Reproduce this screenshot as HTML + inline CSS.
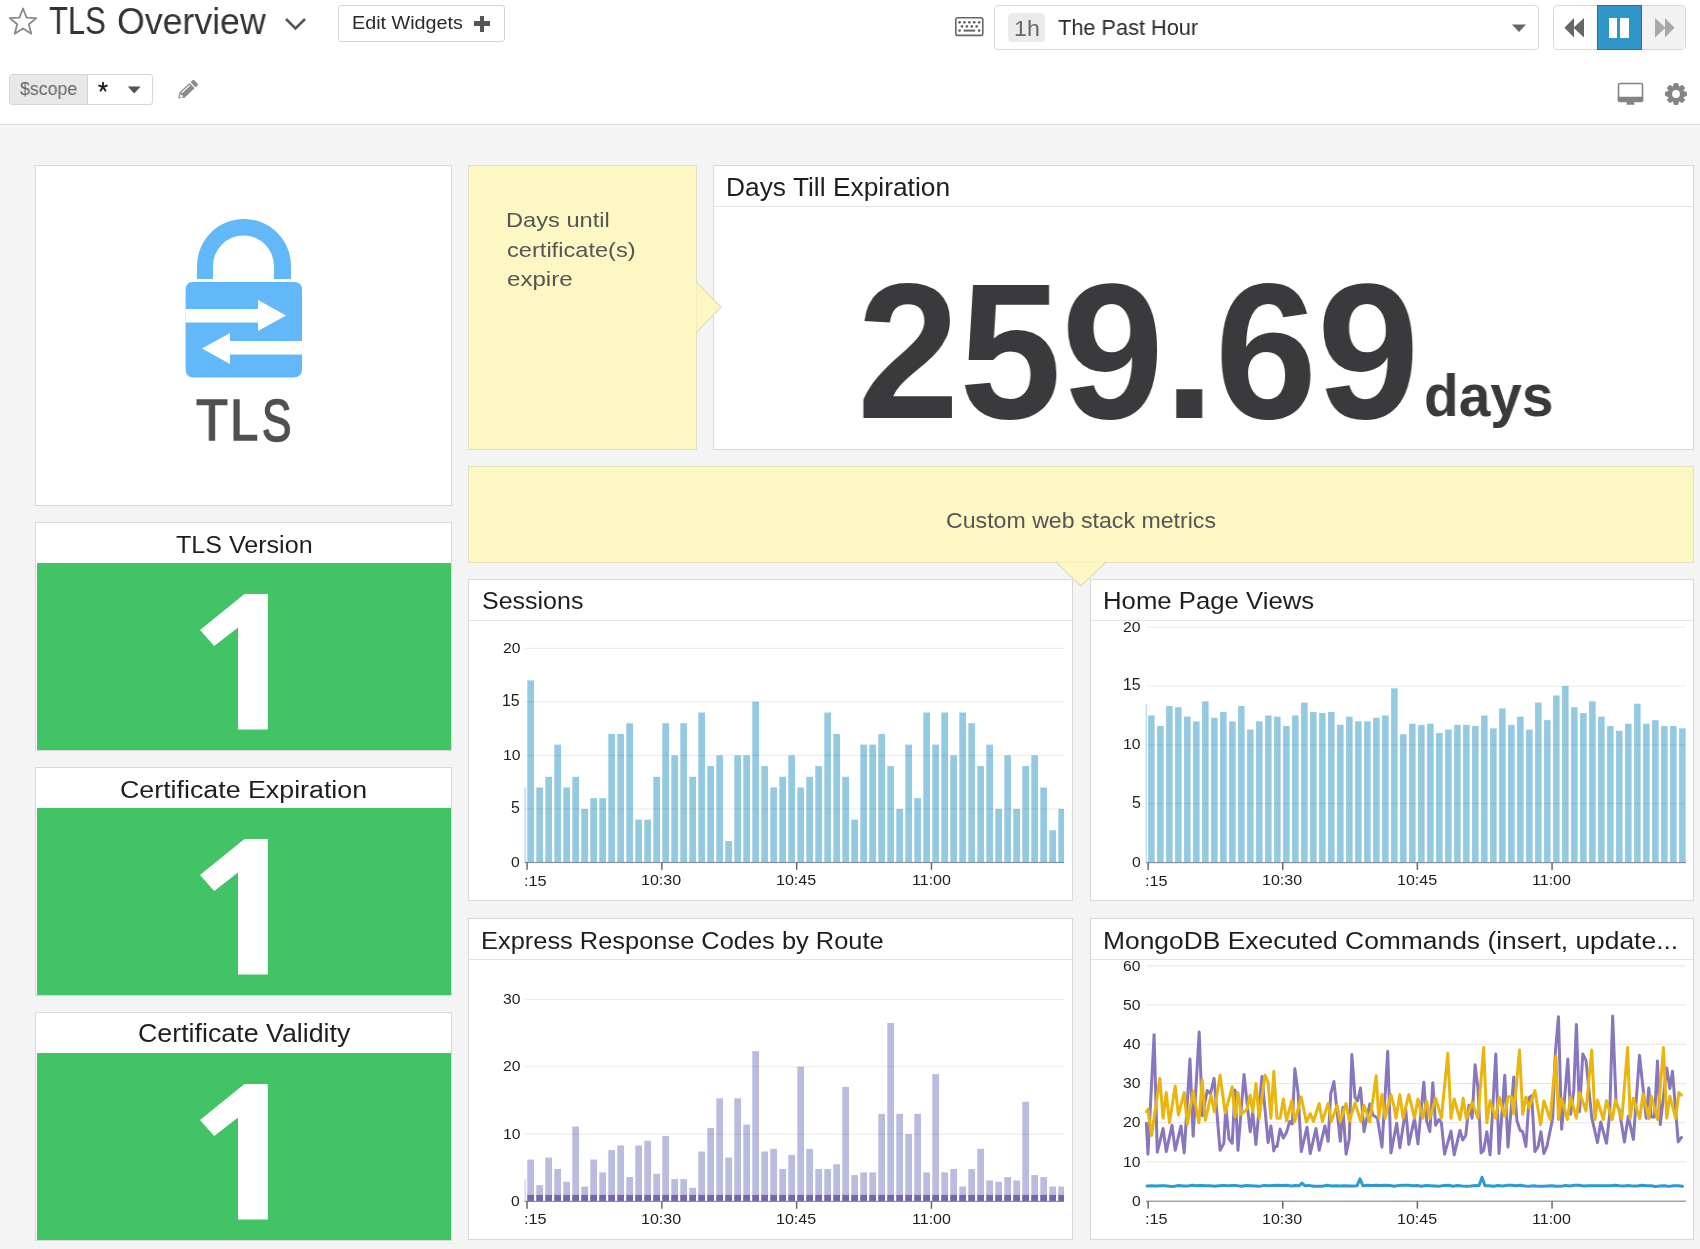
<!DOCTYPE html>
<html><head><meta charset="utf-8"><title>TLS Overview</title>
<style>
html,body{margin:0;padding:0}
body{width:1700px;height:1249px;overflow:hidden;position:relative;background:#f4f4f4;font-family:"Liberation Sans",sans-serif}
.a{position:absolute;box-sizing:content-box}
.t{position:absolute;white-space:nowrap;transform-origin:0 0;will-change:transform}
svg.a{overflow:visible}
</style></head><body>
<div class="a" style="left:0px;top:0px;width:1700px;height:124px;background:#fff;"></div>
<div class="a" style="left:0px;top:124px;width:1700px;height:1px;background:#d9d9d9;"></div>
<div class="a" style="left:0px;top:125px;width:1700px;height:2px;background:#f9f9f9;"></div>
<svg class="a" style="left:8px;top:7px" width="30" height="29" viewBox="0 0 30 29"><polygon points="15,1.5 18.6,10.6 28.3,11.1 20.8,17.3 23.3,26.8 15,21.5 6.7,26.8 9.2,17.3 1.7,11.1 11.4,10.6" fill="none" stroke="#8a8a8a" stroke-width="1.8" stroke-linejoin="round"/></svg>
<div class="t" style="left:49.28px;top:2.40px;font-size:37.86px;line-height:38px;color:#333;transform:scaleX(0.8171);">TLS</div>
<div class="t" style="left:116.59px;top:3.40px;font-size:36.55px;line-height:37px;color:#333;transform:scaleX(0.9763);">Overview</div>
<svg class="a" style="left:283px;top:16px" width="26" height="16" viewBox="0 0 26 16"><polyline points="3,3 12.5,12.5 22,3" fill="none" stroke="#555" stroke-width="2.6"/></svg>
<div class="a" style="left:338px;top:5px;width:165px;height:35px;border:1px solid #d4d4d4;border-radius:3px;background:#fff"></div>
<div class="t" style="left:351.62px;top:14.10px;font-size:18.48px;line-height:18px;color:#2b2b2b;transform:scaleX(1.0693);">Edit Widgets</div>
<div class="a" style="left:474px;top:21.2px;width:16.4px;height:4.6px;background:#555;"></div>
<div class="a" style="left:479.9px;top:15.6px;width:4.6px;height:16px;background:#555;"></div>
<svg class="a" style="left:950px;top:12px" width="40" height="30" viewBox="950 12 40 30"><rect x="955.8" y="17.8" width="27" height="17.6" rx="2" fill="none" stroke="#666" stroke-width="1.6"/><circle cx="959.6" cy="22.3" r="1.35" fill="#666"/><circle cx="964.4" cy="22.3" r="1.35" fill="#666"/><circle cx="969.3" cy="22.3" r="1.35" fill="#666"/><circle cx="974.2" cy="22.3" r="1.35" fill="#666"/><circle cx="979.1" cy="22.3" r="1.35" fill="#666"/><circle cx="962.0" cy="26.4" r="1.35" fill="#666"/><circle cx="966.9" cy="26.4" r="1.35" fill="#666"/><circle cx="971.8" cy="26.4" r="1.35" fill="#666"/><circle cx="976.7" cy="26.4" r="1.35" fill="#666"/><circle cx="959.6" cy="30.6" r="1.35" fill="#666"/><circle cx="979.1" cy="30.6" r="1.35" fill="#666"/><rect x="963.6" y="29.6" width="11.6" height="2" fill="#666"/></svg>
<div class="a" style="left:994px;top:5px;width:543px;height:43px;border:1px solid #d9d9d9;border-radius:4px;background:#fff"></div>
<div class="a" style="left:1008px;top:13px;width:37px;height:29px;border-radius:4px;background:#ebebeb"></div>
<div class="t" style="left:1013.76px;top:16.80px;font-size:22.62px;line-height:23px;color:#666;transform:scaleX(1.0254);">1h</div>
<div class="t" style="left:1058.17px;top:17.30px;font-size:21.93px;line-height:22px;color:#2b2b2b;transform:scaleX(0.9916);">The Past Hour</div>
<svg class="a" style="left:1511px;top:24px" width="16" height="9" viewBox="0 0 16 9"><polygon points="1,0.5 15,0.5 8,8" fill="#666"/></svg>
<div class="a" style="left:1553px;top:5px;width:131px;height:43px;border:1px solid #d9d9d9;border-radius:4px;background:#fff;overflow:hidden"><div style="position:absolute;left:88px;top:0;width:44px;height:43px;background:#f2f2f2"></div></div>
<div class="a" style="left:1597px;top:5px;width:43px;height:43px;background:#3095c9;border:1px solid #1f73a0"></div>
<div class="a" style="left:1609px;top:17.5px;width:8.4px;height:20.3px;background:#fff;"></div>
<div class="a" style="left:1620.4px;top:17.5px;width:9.1px;height:20.3px;background:#fff;"></div>
<svg class="a" style="left:1563px;top:17px" width="23" height="22" viewBox="0 0 23 22"><polygon points="1.4,10.7 11,1.1 11,20.5" fill="#666"/><polygon points="10.5,10.7 21,1.1 21,20.5" fill="#666"/></svg>
<svg class="a" style="left:1653px;top:17px" width="23" height="22" viewBox="0 0 23 22"><polygon points="21.5,10.7 12,1.1 12,20.5" fill="#a8a8a8"/><polygon points="12.5,10.7 2,1.1 2,20.5" fill="#a8a8a8"/></svg>
<div class="a" style="left:9px;top:74px;width:142px;height:29px;border:1px solid #d6d6d6;border-radius:3px;background:#fff;overflow:hidden"><div style="position:absolute;left:0;top:0;width:77px;height:29px;background:#e8e8e8;border-right:1px solid #d6d6d6"></div></div>
<div class="t" style="left:19.82px;top:79.20px;font-size:18.51px;line-height:19px;color:#666;transform:scaleX(0.9610);">$scope</div>
<svg class="a" style="left:96px;top:80px" width="14" height="14" viewBox="0 0 14 14"><g stroke="#222" stroke-width="1.9" stroke-linecap="round"><line x1="7" y1="2.8" x2="7" y2="7"/><line x1="7" y1="7" x2="10.9" y2="5.6"/><line x1="7" y1="7" x2="3.1" y2="5.6"/><line x1="7" y1="7" x2="9.5" y2="10.6"/><line x1="7" y1="7" x2="4.5" y2="10.6"/></g></svg>
<svg class="a" style="left:127px;top:86px" width="15" height="8" viewBox="0 0 15 8"><polygon points="0.8,0.5 13.6,0.5 7.2,7.4" fill="#555"/></svg>
<svg class="a" style="left:170px;top:74px" width="35" height="30" viewBox="170 74 35 30"><g transform="translate(178.2,98.6) rotate(-43)"><polygon points="0,0 5.6,-3.7 19,-3.7 19,3.7 5.6,3.7" fill="#8a8a8a"/><rect x="20.2" y="-3.7" width="4.1" height="7.4" rx="1.3" fill="#8a8a8a"/><rect x="6.6" y="-2.4" width="11.2" height="1.1" fill="#fff"/><polygon points="1.9,0.2 4.6,-1.7 5.4,0.4 4.4,2.2" fill="#fff"/></g></svg>
<svg class="a" style="left:1617px;top:82px" width="27" height="24" viewBox="0 0 27 24"><rect x="1.5" y="1.5" width="24" height="18" rx="1.6" fill="none" stroke="#848484" stroke-width="1.6"/><rect x="0.8" y="14.8" width="25.4" height="5" rx="1.4" fill="#848484"/><polygon points="10,19.5 17,19.5 17.6,22.8 9.4,22.8" fill="#848484"/></svg>
<svg class="a" style="left:1663px;top:81px" width="26" height="26" viewBox="0 0 26 26"><polygon points="10.39,6.07 11.21,2.55 14.79,2.55 15.61,6.07 16.05,6.26 19.12,4.34 21.66,6.88 19.74,9.95 19.93,10.39 23.45,11.21 23.45,14.79 19.93,15.61 19.74,16.05 21.66,19.12 19.12,21.66 16.05,19.74 15.61,19.93 14.79,23.45 11.21,23.45 10.39,19.93 9.95,19.74 6.88,21.66 4.34,19.12 6.26,16.05 6.07,15.61 2.55,14.79 2.55,11.21 6.07,10.39 6.26,9.95 4.34,6.88 6.88,4.34 9.95,6.26" fill="#848484" stroke="#848484" stroke-width="1" stroke-linejoin="round"/><circle cx="13" cy="13" r="3.9" fill="#fff"/></svg>
<div class="a" style="left:35px;top:165px;width:415px;height:339px;background:#fff;border:1px solid #d9d9d9;"></div>
<svg class="a" style="left:180px;top:212px" width="130" height="170" viewBox="180 212 130 170"><path d="M197,279 L197,266 A47,47 0 0 1 291,266 L291,279 L274,279 L274,266 A30.5,30.5 0 0 0 213,266 L213,279 Z" fill="#62b8f8"/><path d="M193,282 L294,282 Q302,282 302,290 L302,369 Q302,377.4 294,377.4 L193,377.4 Q185.6,377.4 185.6,369 L185.6,290 Q185.6,282 193,282 Z" fill="#62b8f8"/><path d="M185.6,309 L258,309 L258,300 L286,315.6 L258,331 L258,322.6 L185.6,322.6 Z" fill="#fff"/><path d="M302,341 L230,341 L230,333 L202,348.5 L230,364 L230,354.6 L302,354.6 Z" fill="#fff"/></svg>
<div class="t" style="left:195.85px;top:390.50px;font-size:58.12px;line-height:58px;color:#505050;transform:scaleX(0.8996);-webkit-text-stroke:1.6px #505050;">T</div>
<div class="t" style="left:230.14px;top:390.50px;font-size:58.12px;line-height:58px;color:#505050;transform:scaleX(0.8739);-webkit-text-stroke:1.6px #505050;">L</div>
<div class="t" style="left:261.62px;top:390.50px;font-size:58.86px;line-height:59px;color:#505050;transform:scaleX(0.7476);-webkit-text-stroke:1.6px #505050;">S</div>
<div class="a" style="left:468px;top:165px;width:227px;height:283px;background:#fdf7c4;border:1px solid #e3dfc0;"></div>
<div class="t" style="left:506.11px;top:208.80px;font-size:20.83px;line-height:21px;color:#555;transform:scaleX(1.1344);">Days until</div>
<div class="t" style="left:506.94px;top:238.70px;font-size:20.97px;line-height:21px;color:#555;transform:scaleX(1.1265);">certificate(s)</div>
<div class="t" style="left:506.92px;top:269.00px;font-size:20.00px;line-height:20px;color:#555;transform:scaleX(1.2049);">expire</div>
<div class="a" style="left:713px;top:165px;width:979px;height:283px;background:#fff;border:1px solid #d9d9d9;"></div>
<div class="a" style="left:714px;top:206px;width:979px;height:1px;background:#e2e2e2;"></div>
<div class="t" style="left:726.09px;top:174.40px;font-size:25.93px;line-height:26px;color:#1e1e1e;transform:scaleX(1.0168);">Days Till Expiration</div>
<div class="t" style="left:857.17px;top:253.60px;font-size:193.71px;line-height:194px;color:#3a3a3c;transform:scaleX(0.9491);font-weight:bold;">259.69</div>
<div class="t" style="left:1423.73px;top:367.20px;font-size:58.34px;line-height:58px;color:#3a3a3c;transform:scaleX(0.9738);font-weight:bold;">days</div>
<div class="a" style="left:468px;top:466px;width:1224px;height:95px;background:#fdf7c4;border:1px solid #e3dfc0;"></div>
<div class="t" style="left:946.14px;top:510.90px;font-size:21.38px;line-height:21px;color:#555;transform:scaleX(1.0824);">Custom web stack metrics</div>
<div class="a" style="left:35px;top:522px;width:415px;height:227px;background:#fff;border:1px solid #d9d9d9;"></div>
<div class="a" style="left:37px;top:563px;width:414px;height:187px;background:#42c365;"></div>
<div class="t" style="left:175.80px;top:531.80px;font-size:24.69px;line-height:25px;color:#1e1e1e;transform:scaleX(1.0156);">TLS Version</div>
<svg class="a" style="left:190px;top:585px" width="90" height="155" viewBox="190 585 90 155"><polygon points="244.5,594 267.8,594 267.8,729.5 238,729.5 238,627.6 214.2,646 200,630.1" fill="#fff"/></svg>
<div class="a" style="left:35px;top:767px;width:415px;height:227px;background:#fff;border:1px solid #d9d9d9;"></div>
<div class="a" style="left:37px;top:808px;width:414px;height:187px;background:#42c365;"></div>
<div class="t" style="left:120.46px;top:776.80px;font-size:24.69px;line-height:25px;color:#1e1e1e;transform:scaleX(1.0848);">Certificate Expiration</div>
<svg class="a" style="left:190px;top:830px" width="90" height="155" viewBox="190 830 90 155"><polygon points="244.5,839 267.8,839 267.8,974.5 238,974.5 238,872.6 214.2,891 200,875.1" fill="#fff"/></svg>
<div class="a" style="left:35px;top:1012px;width:415px;height:227px;background:#fff;border:1px solid #d9d9d9;"></div>
<div class="a" style="left:37px;top:1053px;width:414px;height:187px;background:#42c365;"></div>
<div class="t" style="left:137.56px;top:1020.80px;font-size:25.38px;line-height:25px;color:#1e1e1e;transform:scaleX(1.0557);">Certificate Validity</div>
<svg class="a" style="left:190px;top:1075px" width="90" height="155" viewBox="190 1075 90 155"><polygon points="244.5,1084 267.8,1084 267.8,1219.5 238,1219.5 238,1117.6 214.2,1136 200,1120.1" fill="#fff"/></svg>
<div class="a" style="left:468px;top:579px;width:603px;height:320px;background:#fff;border:1px solid #d9d9d9;"></div>
<div class="a" style="left:469px;top:620px;width:603px;height:1px;background:#e2e2e2;"></div>
<div class="a" style="left:1090px;top:579px;width:602px;height:320px;background:#fff;border:1px solid #d9d9d9;"></div>
<div class="a" style="left:1091px;top:620px;width:602px;height:1px;background:#e2e2e2;"></div>
<div class="a" style="left:468px;top:918px;width:603px;height:320px;background:#fff;border:1px solid #d9d9d9;"></div>
<div class="a" style="left:469px;top:959px;width:603px;height:1px;background:#e2e2e2;"></div>
<div class="a" style="left:1090px;top:918px;width:602px;height:320px;background:#fff;border:1px solid #d9d9d9;"></div>
<div class="a" style="left:1091px;top:959px;width:602px;height:1px;background:#e2e2e2;"></div>
<div class="t" style="left:481.88px;top:589.10px;font-size:24.41px;line-height:24px;color:#1e1e1e;transform:scaleX(1.0240);">Sessions</div>
<div class="t" style="left:1102.64px;top:589.10px;font-size:24.28px;line-height:24px;color:#1e1e1e;transform:scaleX(1.0600);">Home Page Views</div>
<div class="t" style="left:480.97px;top:927.60px;font-size:24.69px;line-height:25px;color:#1e1e1e;transform:scaleX(1.0294);">Express Response Codes by Route</div>
<div class="t" style="left:1102.59px;top:927.60px;font-size:24.69px;line-height:25px;color:#1e1e1e;transform:scaleX(1.0692);">MongoDB Executed Commands (insert, update...</div>
<svg class="a" style="left:0;top:0" width="1700" height="1249" viewBox="0 0 1700 1249">
<rect x="524.4" y="787.46" width="1.8" height="74.94" fill="#c4e0ee"/>
<rect x="527.30" y="680.41" width="6.70" height="181.99" fill="#94c9e2"/>
<rect x="536.30" y="787.46" width="6.70" height="74.94" fill="#94c9e2"/>
<rect x="545.30" y="776.76" width="6.70" height="85.64" fill="#94c9e2"/>
<rect x="554.30" y="744.64" width="6.70" height="117.76" fill="#94c9e2"/>
<rect x="563.30" y="787.46" width="6.70" height="74.94" fill="#94c9e2"/>
<rect x="572.30" y="776.76" width="6.70" height="85.64" fill="#94c9e2"/>
<rect x="581.30" y="808.88" width="6.70" height="53.53" fill="#94c9e2"/>
<rect x="590.30" y="798.17" width="6.70" height="64.23" fill="#94c9e2"/>
<rect x="599.30" y="798.17" width="6.70" height="64.23" fill="#94c9e2"/>
<rect x="608.30" y="733.94" width="6.70" height="128.46" fill="#94c9e2"/>
<rect x="617.30" y="733.94" width="6.70" height="128.46" fill="#94c9e2"/>
<rect x="626.30" y="723.23" width="6.70" height="139.17" fill="#94c9e2"/>
<rect x="635.30" y="819.58" width="6.70" height="42.82" fill="#94c9e2"/>
<rect x="644.30" y="819.58" width="6.70" height="42.82" fill="#94c9e2"/>
<rect x="653.30" y="776.76" width="6.70" height="85.64" fill="#94c9e2"/>
<rect x="662.30" y="723.23" width="6.70" height="139.17" fill="#94c9e2"/>
<rect x="671.30" y="755.35" width="6.70" height="107.05" fill="#94c9e2"/>
<rect x="680.30" y="723.23" width="6.70" height="139.17" fill="#94c9e2"/>
<rect x="689.30" y="776.76" width="6.70" height="85.64" fill="#94c9e2"/>
<rect x="698.30" y="712.53" width="6.70" height="149.87" fill="#94c9e2"/>
<rect x="707.30" y="766.05" width="6.70" height="96.35" fill="#94c9e2"/>
<rect x="716.30" y="755.35" width="6.70" height="107.05" fill="#94c9e2"/>
<rect x="725.30" y="840.99" width="6.70" height="21.41" fill="#94c9e2"/>
<rect x="734.30" y="755.35" width="6.70" height="107.05" fill="#94c9e2"/>
<rect x="743.30" y="755.35" width="6.70" height="107.05" fill="#94c9e2"/>
<rect x="752.30" y="701.82" width="6.70" height="160.58" fill="#94c9e2"/>
<rect x="761.30" y="766.05" width="6.70" height="96.35" fill="#94c9e2"/>
<rect x="770.30" y="787.46" width="6.70" height="74.94" fill="#94c9e2"/>
<rect x="779.30" y="776.76" width="6.70" height="85.64" fill="#94c9e2"/>
<rect x="788.30" y="755.35" width="6.70" height="107.05" fill="#94c9e2"/>
<rect x="797.30" y="787.46" width="6.70" height="74.94" fill="#94c9e2"/>
<rect x="806.30" y="776.76" width="6.70" height="85.64" fill="#94c9e2"/>
<rect x="815.30" y="766.05" width="6.70" height="96.35" fill="#94c9e2"/>
<rect x="824.30" y="712.53" width="6.70" height="149.87" fill="#94c9e2"/>
<rect x="833.30" y="733.94" width="6.70" height="128.46" fill="#94c9e2"/>
<rect x="842.30" y="776.76" width="6.70" height="85.64" fill="#94c9e2"/>
<rect x="851.30" y="819.58" width="6.70" height="42.82" fill="#94c9e2"/>
<rect x="860.30" y="744.64" width="6.70" height="117.76" fill="#94c9e2"/>
<rect x="869.30" y="744.64" width="6.70" height="117.76" fill="#94c9e2"/>
<rect x="878.30" y="733.94" width="6.70" height="128.46" fill="#94c9e2"/>
<rect x="887.30" y="766.05" width="6.70" height="96.35" fill="#94c9e2"/>
<rect x="896.30" y="808.88" width="6.70" height="53.53" fill="#94c9e2"/>
<rect x="905.30" y="744.64" width="6.70" height="117.76" fill="#94c9e2"/>
<rect x="914.30" y="798.17" width="6.70" height="64.23" fill="#94c9e2"/>
<rect x="923.30" y="712.53" width="6.70" height="149.87" fill="#94c9e2"/>
<rect x="932.30" y="744.64" width="6.70" height="117.76" fill="#94c9e2"/>
<rect x="941.30" y="712.53" width="6.70" height="149.87" fill="#94c9e2"/>
<rect x="950.30" y="755.35" width="6.70" height="107.05" fill="#94c9e2"/>
<rect x="959.30" y="712.53" width="6.70" height="149.87" fill="#94c9e2"/>
<rect x="968.30" y="723.23" width="6.70" height="139.17" fill="#94c9e2"/>
<rect x="977.30" y="766.05" width="6.70" height="96.35" fill="#94c9e2"/>
<rect x="986.30" y="744.64" width="6.70" height="117.76" fill="#94c9e2"/>
<rect x="995.30" y="808.88" width="6.70" height="53.53" fill="#94c9e2"/>
<rect x="1004.30" y="755.35" width="6.70" height="107.05" fill="#94c9e2"/>
<rect x="1013.30" y="808.88" width="6.70" height="53.53" fill="#94c9e2"/>
<rect x="1022.30" y="766.05" width="6.70" height="96.35" fill="#94c9e2"/>
<rect x="1031.30" y="755.35" width="6.70" height="107.05" fill="#94c9e2"/>
<rect x="1040.30" y="787.46" width="6.70" height="74.94" fill="#94c9e2"/>
<rect x="1049.30" y="830.28" width="6.70" height="32.12" fill="#94c9e2"/>
<rect x="1058.30" y="808.88" width="5.70" height="53.53" fill="#94c9e2"/>
<rect x="524.7" y="808.38" width="539.3" height="1" fill="rgba(0,0,0,0.085)"/>
<rect x="524.7" y="754.85" width="539.3" height="1" fill="rgba(0,0,0,0.085)"/>
<rect x="524.7" y="701.32" width="539.3" height="1" fill="rgba(0,0,0,0.085)"/>
<rect x="524.7" y="647.80" width="539.3" height="1" fill="rgba(0,0,0,0.085)"/>
<rect x="524.7" y="861.90" width="539.3" height="1.2" fill="#7f929c"/>
<rect x="526.30" y="862.40" width="1.5" height="7.5" fill="#6a6a6a"/>
<rect x="661.10" y="862.40" width="1.5" height="7.5" fill="#6a6a6a"/>
<rect x="795.90" y="862.40" width="1.5" height="7.5" fill="#6a6a6a"/>
<rect x="930.70" y="862.40" width="1.5" height="7.5" fill="#6a6a6a"/>
<rect x="1145.5" y="703.67" width="1.6" height="158.83" fill="#c4e0ee"/>
<rect x="1148.10" y="715.44" width="6.50" height="147.06" fill="#94c9e2"/>
<rect x="1157.10" y="726.03" width="6.50" height="136.47" fill="#94c9e2"/>
<rect x="1166.10" y="706.03" width="6.50" height="156.47" fill="#94c9e2"/>
<rect x="1175.10" y="707.20" width="6.50" height="155.30" fill="#94c9e2"/>
<rect x="1184.10" y="716.61" width="6.50" height="145.89" fill="#94c9e2"/>
<rect x="1193.10" y="721.32" width="6.50" height="141.18" fill="#94c9e2"/>
<rect x="1202.10" y="701.32" width="6.50" height="161.18" fill="#94c9e2"/>
<rect x="1211.10" y="717.79" width="6.50" height="144.71" fill="#94c9e2"/>
<rect x="1220.10" y="711.91" width="6.50" height="150.59" fill="#94c9e2"/>
<rect x="1229.10" y="721.32" width="6.50" height="141.18" fill="#94c9e2"/>
<rect x="1238.10" y="706.03" width="6.50" height="156.47" fill="#94c9e2"/>
<rect x="1247.10" y="729.56" width="6.50" height="132.94" fill="#94c9e2"/>
<rect x="1256.10" y="721.32" width="6.50" height="141.18" fill="#94c9e2"/>
<rect x="1265.10" y="715.44" width="6.50" height="147.06" fill="#94c9e2"/>
<rect x="1274.10" y="716.61" width="6.50" height="145.89" fill="#94c9e2"/>
<rect x="1283.10" y="726.03" width="6.50" height="136.47" fill="#94c9e2"/>
<rect x="1292.10" y="715.44" width="6.50" height="147.06" fill="#94c9e2"/>
<rect x="1301.10" y="702.50" width="6.50" height="160.00" fill="#94c9e2"/>
<rect x="1310.10" y="711.91" width="6.50" height="150.59" fill="#94c9e2"/>
<rect x="1319.10" y="713.08" width="6.50" height="149.42" fill="#94c9e2"/>
<rect x="1328.10" y="711.91" width="6.50" height="150.59" fill="#94c9e2"/>
<rect x="1337.10" y="724.85" width="6.50" height="137.65" fill="#94c9e2"/>
<rect x="1346.10" y="716.61" width="6.50" height="145.89" fill="#94c9e2"/>
<rect x="1355.10" y="721.32" width="6.50" height="141.18" fill="#94c9e2"/>
<rect x="1364.10" y="721.32" width="6.50" height="141.18" fill="#94c9e2"/>
<rect x="1373.10" y="717.79" width="6.50" height="144.71" fill="#94c9e2"/>
<rect x="1382.10" y="715.44" width="6.50" height="147.06" fill="#94c9e2"/>
<rect x="1391.10" y="688.38" width="6.50" height="174.12" fill="#94c9e2"/>
<rect x="1400.10" y="734.26" width="6.50" height="128.24" fill="#94c9e2"/>
<rect x="1409.10" y="723.67" width="6.50" height="138.83" fill="#94c9e2"/>
<rect x="1418.10" y="724.85" width="6.50" height="137.65" fill="#94c9e2"/>
<rect x="1427.10" y="723.67" width="6.50" height="138.83" fill="#94c9e2"/>
<rect x="1436.10" y="733.09" width="6.50" height="129.41" fill="#94c9e2"/>
<rect x="1445.10" y="729.56" width="6.50" height="132.94" fill="#94c9e2"/>
<rect x="1454.10" y="724.85" width="6.50" height="137.65" fill="#94c9e2"/>
<rect x="1463.10" y="724.85" width="6.50" height="137.65" fill="#94c9e2"/>
<rect x="1472.10" y="726.03" width="6.50" height="136.47" fill="#94c9e2"/>
<rect x="1481.10" y="715.44" width="6.50" height="147.06" fill="#94c9e2"/>
<rect x="1490.10" y="728.38" width="6.50" height="134.12" fill="#94c9e2"/>
<rect x="1499.10" y="708.38" width="6.50" height="154.12" fill="#94c9e2"/>
<rect x="1508.10" y="724.85" width="6.50" height="137.65" fill="#94c9e2"/>
<rect x="1517.10" y="716.61" width="6.50" height="145.89" fill="#94c9e2"/>
<rect x="1526.10" y="729.56" width="6.50" height="132.94" fill="#94c9e2"/>
<rect x="1535.10" y="702.50" width="6.50" height="160.00" fill="#94c9e2"/>
<rect x="1544.10" y="720.14" width="6.50" height="142.36" fill="#94c9e2"/>
<rect x="1553.10" y="695.44" width="6.50" height="167.06" fill="#94c9e2"/>
<rect x="1562.10" y="686.03" width="6.50" height="176.47" fill="#94c9e2"/>
<rect x="1571.10" y="707.20" width="6.50" height="155.30" fill="#94c9e2"/>
<rect x="1580.10" y="713.08" width="6.50" height="149.42" fill="#94c9e2"/>
<rect x="1589.10" y="701.32" width="6.50" height="161.18" fill="#94c9e2"/>
<rect x="1598.10" y="716.61" width="6.50" height="145.89" fill="#94c9e2"/>
<rect x="1607.10" y="726.03" width="6.50" height="136.47" fill="#94c9e2"/>
<rect x="1616.10" y="730.73" width="6.50" height="131.77" fill="#94c9e2"/>
<rect x="1625.10" y="723.67" width="6.50" height="138.83" fill="#94c9e2"/>
<rect x="1634.10" y="703.67" width="6.50" height="158.83" fill="#94c9e2"/>
<rect x="1643.10" y="723.67" width="6.50" height="138.83" fill="#94c9e2"/>
<rect x="1652.10" y="720.14" width="6.50" height="142.36" fill="#94c9e2"/>
<rect x="1661.10" y="726.03" width="6.50" height="136.47" fill="#94c9e2"/>
<rect x="1670.10" y="726.03" width="6.50" height="136.47" fill="#94c9e2"/>
<rect x="1679.10" y="728.38" width="6.50" height="134.12" fill="#94c9e2"/>
<rect x="1146" y="803.17" width="540" height="1" fill="rgba(0,0,0,0.085)"/>
<rect x="1146" y="744.35" width="540" height="1" fill="rgba(0,0,0,0.085)"/>
<rect x="1146" y="685.53" width="540" height="1" fill="rgba(0,0,0,0.085)"/>
<rect x="1146" y="626.70" width="540" height="1" fill="rgba(0,0,0,0.085)"/>
<rect x="1146" y="862.00" width="540" height="1.2" fill="#7f929c"/>
<rect x="1147.40" y="862.50" width="1.5" height="7.5" fill="#6a6a6a"/>
<rect x="1282.00" y="862.50" width="1.5" height="7.5" fill="#6a6a6a"/>
<rect x="1416.60" y="862.50" width="1.5" height="7.5" fill="#6a6a6a"/>
<rect x="1551.30" y="862.50" width="1.5" height="7.5" fill="#6a6a6a"/>
<rect x="524.4" y="1179.09" width="1.8" height="22.21" fill="#d9daee"/>
<rect x="527.30" y="1159.57" width="6.70" height="41.73" fill="#b9bcdf"/>
<rect x="527.30" y="1194.91" width="6.70" height="6.39" fill="#7267ae"/>
<rect x="536.30" y="1185.15" width="6.70" height="16.15" fill="#b9bcdf"/>
<rect x="536.30" y="1194.91" width="6.70" height="6.39" fill="#7267ae"/>
<rect x="545.30" y="1157.56" width="6.70" height="43.74" fill="#b9bcdf"/>
<rect x="545.30" y="1194.91" width="6.70" height="6.39" fill="#7267ae"/>
<rect x="554.30" y="1169.00" width="6.70" height="32.30" fill="#b9bcdf"/>
<rect x="554.30" y="1194.91" width="6.70" height="6.39" fill="#7267ae"/>
<rect x="563.30" y="1181.78" width="6.70" height="19.52" fill="#b9bcdf"/>
<rect x="563.30" y="1194.91" width="6.70" height="6.39" fill="#7267ae"/>
<rect x="572.30" y="1126.60" width="6.70" height="74.70" fill="#b9bcdf"/>
<rect x="572.30" y="1194.91" width="6.70" height="6.39" fill="#7267ae"/>
<rect x="581.30" y="1186.49" width="6.70" height="14.81" fill="#b9bcdf"/>
<rect x="581.30" y="1194.91" width="6.70" height="6.39" fill="#7267ae"/>
<rect x="590.30" y="1159.57" width="6.70" height="41.73" fill="#b9bcdf"/>
<rect x="590.30" y="1194.91" width="6.70" height="6.39" fill="#7267ae"/>
<rect x="599.30" y="1172.36" width="6.70" height="28.94" fill="#b9bcdf"/>
<rect x="599.30" y="1194.91" width="6.70" height="6.39" fill="#7267ae"/>
<rect x="608.30" y="1150.15" width="6.70" height="51.15" fill="#b9bcdf"/>
<rect x="608.30" y="1194.91" width="6.70" height="6.39" fill="#7267ae"/>
<rect x="617.30" y="1145.44" width="6.70" height="55.86" fill="#b9bcdf"/>
<rect x="617.30" y="1194.91" width="6.70" height="6.39" fill="#7267ae"/>
<rect x="626.30" y="1177.07" width="6.70" height="24.23" fill="#b9bcdf"/>
<rect x="626.30" y="1194.91" width="6.70" height="6.39" fill="#7267ae"/>
<rect x="635.30" y="1145.44" width="6.70" height="55.86" fill="#b9bcdf"/>
<rect x="635.30" y="1194.91" width="6.70" height="6.39" fill="#7267ae"/>
<rect x="644.30" y="1140.73" width="6.70" height="60.57" fill="#b9bcdf"/>
<rect x="644.30" y="1194.91" width="6.70" height="6.39" fill="#7267ae"/>
<rect x="653.30" y="1173.71" width="6.70" height="27.59" fill="#b9bcdf"/>
<rect x="653.30" y="1194.91" width="6.70" height="6.39" fill="#7267ae"/>
<rect x="662.30" y="1136.02" width="6.70" height="65.28" fill="#b9bcdf"/>
<rect x="662.30" y="1194.91" width="6.70" height="6.39" fill="#7267ae"/>
<rect x="671.30" y="1179.09" width="6.70" height="22.21" fill="#b9bcdf"/>
<rect x="671.30" y="1194.91" width="6.70" height="6.39" fill="#7267ae"/>
<rect x="680.30" y="1179.09" width="6.70" height="22.21" fill="#b9bcdf"/>
<rect x="680.30" y="1194.91" width="6.70" height="6.39" fill="#7267ae"/>
<rect x="689.30" y="1187.84" width="6.70" height="13.46" fill="#b9bcdf"/>
<rect x="689.30" y="1194.91" width="6.70" height="6.39" fill="#7267ae"/>
<rect x="698.30" y="1151.50" width="6.70" height="49.80" fill="#b9bcdf"/>
<rect x="698.30" y="1194.91" width="6.70" height="6.39" fill="#7267ae"/>
<rect x="707.30" y="1127.94" width="6.70" height="73.36" fill="#b9bcdf"/>
<rect x="707.30" y="1194.91" width="6.70" height="6.39" fill="#7267ae"/>
<rect x="716.30" y="1098.33" width="6.70" height="102.97" fill="#b9bcdf"/>
<rect x="716.30" y="1194.91" width="6.70" height="6.39" fill="#7267ae"/>
<rect x="725.30" y="1157.56" width="6.70" height="43.74" fill="#b9bcdf"/>
<rect x="725.30" y="1194.91" width="6.70" height="6.39" fill="#7267ae"/>
<rect x="734.30" y="1098.33" width="6.70" height="102.97" fill="#b9bcdf"/>
<rect x="734.30" y="1194.91" width="6.70" height="6.39" fill="#7267ae"/>
<rect x="743.30" y="1124.58" width="6.70" height="76.72" fill="#b9bcdf"/>
<rect x="743.30" y="1194.91" width="6.70" height="6.39" fill="#7267ae"/>
<rect x="752.30" y="1051.22" width="6.70" height="150.08" fill="#b9bcdf"/>
<rect x="752.30" y="1194.91" width="6.70" height="6.39" fill="#7267ae"/>
<rect x="761.30" y="1151.50" width="6.70" height="49.80" fill="#b9bcdf"/>
<rect x="761.30" y="1194.91" width="6.70" height="6.39" fill="#7267ae"/>
<rect x="770.30" y="1148.81" width="6.70" height="52.49" fill="#b9bcdf"/>
<rect x="770.30" y="1194.91" width="6.70" height="6.39" fill="#7267ae"/>
<rect x="779.30" y="1169.00" width="6.70" height="32.30" fill="#b9bcdf"/>
<rect x="779.30" y="1194.91" width="6.70" height="6.39" fill="#7267ae"/>
<rect x="788.30" y="1154.86" width="6.70" height="46.44" fill="#b9bcdf"/>
<rect x="788.30" y="1194.91" width="6.70" height="6.39" fill="#7267ae"/>
<rect x="797.30" y="1066.70" width="6.70" height="134.60" fill="#b9bcdf"/>
<rect x="797.30" y="1194.91" width="6.70" height="6.39" fill="#7267ae"/>
<rect x="806.30" y="1148.81" width="6.70" height="52.49" fill="#b9bcdf"/>
<rect x="806.30" y="1194.91" width="6.70" height="6.39" fill="#7267ae"/>
<rect x="815.30" y="1169.00" width="6.70" height="32.30" fill="#b9bcdf"/>
<rect x="815.30" y="1194.91" width="6.70" height="6.39" fill="#7267ae"/>
<rect x="824.30" y="1169.00" width="6.70" height="32.30" fill="#b9bcdf"/>
<rect x="824.30" y="1194.91" width="6.70" height="6.39" fill="#7267ae"/>
<rect x="833.30" y="1164.28" width="6.70" height="37.02" fill="#b9bcdf"/>
<rect x="833.30" y="1194.91" width="6.70" height="6.39" fill="#7267ae"/>
<rect x="842.30" y="1086.89" width="6.70" height="114.41" fill="#b9bcdf"/>
<rect x="842.30" y="1194.91" width="6.70" height="6.39" fill="#7267ae"/>
<rect x="851.30" y="1175.05" width="6.70" height="26.25" fill="#b9bcdf"/>
<rect x="851.30" y="1194.91" width="6.70" height="6.39" fill="#7267ae"/>
<rect x="860.30" y="1172.36" width="6.70" height="28.94" fill="#b9bcdf"/>
<rect x="860.30" y="1194.91" width="6.70" height="6.39" fill="#7267ae"/>
<rect x="869.30" y="1172.36" width="6.70" height="28.94" fill="#b9bcdf"/>
<rect x="869.30" y="1194.91" width="6.70" height="6.39" fill="#7267ae"/>
<rect x="878.30" y="1113.81" width="6.70" height="87.49" fill="#b9bcdf"/>
<rect x="878.30" y="1194.91" width="6.70" height="6.39" fill="#7267ae"/>
<rect x="887.30" y="1022.95" width="6.70" height="178.34" fill="#b9bcdf"/>
<rect x="887.30" y="1194.91" width="6.70" height="6.39" fill="#7267ae"/>
<rect x="896.30" y="1113.81" width="6.70" height="87.49" fill="#b9bcdf"/>
<rect x="896.30" y="1194.91" width="6.70" height="6.39" fill="#7267ae"/>
<rect x="905.30" y="1134.00" width="6.70" height="67.30" fill="#b9bcdf"/>
<rect x="905.30" y="1194.91" width="6.70" height="6.39" fill="#7267ae"/>
<rect x="914.30" y="1113.81" width="6.70" height="87.49" fill="#b9bcdf"/>
<rect x="914.30" y="1194.91" width="6.70" height="6.39" fill="#7267ae"/>
<rect x="923.30" y="1172.36" width="6.70" height="28.94" fill="#b9bcdf"/>
<rect x="923.30" y="1194.91" width="6.70" height="6.39" fill="#7267ae"/>
<rect x="932.30" y="1074.10" width="6.70" height="127.20" fill="#b9bcdf"/>
<rect x="932.30" y="1194.91" width="6.70" height="6.39" fill="#7267ae"/>
<rect x="941.30" y="1172.36" width="6.70" height="28.94" fill="#b9bcdf"/>
<rect x="941.30" y="1194.91" width="6.70" height="6.39" fill="#7267ae"/>
<rect x="950.30" y="1169.00" width="6.70" height="32.30" fill="#b9bcdf"/>
<rect x="950.30" y="1194.91" width="6.70" height="6.39" fill="#7267ae"/>
<rect x="959.30" y="1186.49" width="6.70" height="14.81" fill="#b9bcdf"/>
<rect x="959.30" y="1194.91" width="6.70" height="6.39" fill="#7267ae"/>
<rect x="968.30" y="1169.00" width="6.70" height="32.30" fill="#b9bcdf"/>
<rect x="968.30" y="1194.91" width="6.70" height="6.39" fill="#7267ae"/>
<rect x="977.30" y="1148.81" width="6.70" height="52.49" fill="#b9bcdf"/>
<rect x="977.30" y="1194.91" width="6.70" height="6.39" fill="#7267ae"/>
<rect x="986.30" y="1180.44" width="6.70" height="20.86" fill="#b9bcdf"/>
<rect x="986.30" y="1194.91" width="6.70" height="6.39" fill="#7267ae"/>
<rect x="995.30" y="1181.78" width="6.70" height="19.52" fill="#b9bcdf"/>
<rect x="995.30" y="1194.91" width="6.70" height="6.39" fill="#7267ae"/>
<rect x="1004.30" y="1177.07" width="6.70" height="24.23" fill="#b9bcdf"/>
<rect x="1004.30" y="1194.91" width="6.70" height="6.39" fill="#7267ae"/>
<rect x="1013.30" y="1180.44" width="6.70" height="20.86" fill="#b9bcdf"/>
<rect x="1013.30" y="1194.91" width="6.70" height="6.39" fill="#7267ae"/>
<rect x="1022.30" y="1101.70" width="6.70" height="99.60" fill="#b9bcdf"/>
<rect x="1022.30" y="1194.91" width="6.70" height="6.39" fill="#7267ae"/>
<rect x="1031.30" y="1175.05" width="6.70" height="26.25" fill="#b9bcdf"/>
<rect x="1031.30" y="1194.91" width="6.70" height="6.39" fill="#7267ae"/>
<rect x="1040.30" y="1177.07" width="6.70" height="24.23" fill="#b9bcdf"/>
<rect x="1040.30" y="1194.91" width="6.70" height="6.39" fill="#7267ae"/>
<rect x="1049.30" y="1186.49" width="6.70" height="14.81" fill="#b9bcdf"/>
<rect x="1049.30" y="1194.91" width="6.70" height="6.39" fill="#7267ae"/>
<rect x="1058.30" y="1186.49" width="5.70" height="14.81" fill="#b9bcdf"/>
<rect x="1058.30" y="1194.91" width="5.70" height="6.39" fill="#7267ae"/>
<rect x="524.7" y="1133.50" width="539.3" height="1" fill="rgba(0,0,0,0.085)"/>
<rect x="524.7" y="1066.20" width="539.3" height="1" fill="rgba(0,0,0,0.085)"/>
<rect x="524.7" y="998.90" width="539.3" height="1" fill="rgba(0,0,0,0.085)"/>
<rect x="524.7" y="1200.80" width="539.3" height="1.2" fill="#7f929c"/>
<rect x="526.30" y="1201.30" width="1.5" height="7.5" fill="#6a6a6a"/>
<rect x="661.10" y="1201.30" width="1.5" height="7.5" fill="#6a6a6a"/>
<rect x="795.90" y="1201.30" width="1.5" height="7.5" fill="#6a6a6a"/>
<rect x="930.70" y="1201.30" width="1.5" height="7.5" fill="#6a6a6a"/>
<rect x="1146" y="1161.40" width="540" height="1" fill="#e6e6e6"/>
<rect x="1146" y="1122.20" width="540" height="1" fill="#e6e6e6"/>
<rect x="1146" y="1083.00" width="540" height="1" fill="#e6e6e6"/>
<rect x="1146" y="1043.80" width="540" height="1" fill="#e6e6e6"/>
<rect x="1146" y="1004.60" width="540" height="1" fill="#e6e6e6"/>
<rect x="1146" y="965.40" width="540" height="1" fill="#e6e6e6"/>
<rect x="1146" y="1200.60" width="540" height="1.2" fill="#7f929c"/>
<path d="M1146.40,1123.34 L1147.94,1154.19 L1154.09,1034.66 L1157.29,1152.26 L1163.06,1128.48 L1166.26,1151.62 L1172.02,1125.27 L1175.22,1150.33 L1180.99,1125.91 L1184.19,1152.90 L1189.96,1059.08 L1193.16,1136.20 L1199.18,1032.09 L1202.38,1115.63 L1207.25,1090.57 L1210.45,1093.78 L1214.04,1078.36 L1220.06,1150.33 L1223.90,1143.26 L1225.82,1106.63 L1229.02,1138.77 L1232.22,1143.26 L1235.04,1089.93 L1237.99,1150.33 L1244.01,1074.50 L1250.16,1131.70 L1252.72,1111.78 L1255.92,1144.55 L1261.94,1076.43 L1268.09,1142.62 L1270.91,1125.91 L1273.85,1150.98 L1275.00,1146.48 L1277.06,1146.48 L1280.12,1129.13 L1283.33,1138.12 L1286.53,1132.34 L1289.73,1121.41 L1292.29,1123.99 L1294.85,1068.72 L1298.06,1092.50 L1301.26,1151.62 L1307.02,1127.20 L1310.22,1153.55 L1315.99,1128.48 L1319.19,1150.33 L1324.96,1125.91 L1328.16,1141.34 L1330.72,1093.78 L1333.92,1081.57 L1340.33,1141.34 L1342.89,1107.28 L1346.09,1154.19 L1349.29,1138.77 L1351.85,1054.58 L1355.06,1097.64 L1357.62,1100.85 L1360.56,1088.00 L1364.02,1131.70 L1369.79,1104.06 L1372.99,1114.99 L1377.47,1118.20 L1381.96,1147.12 L1387.72,1051.37 L1390.92,1152.90 L1396.69,1123.34 L1399.89,1147.76 L1405.65,1109.20 L1408.85,1144.55 L1414.48,1118.20 L1417.94,1143.91 L1423.83,1082.21 L1426.65,1120.77 L1429.85,1131.70 L1432.80,1082.86 L1435.62,1125.27 L1438.82,1119.49 L1441.38,1122.70 L1444.58,1154.19 L1450.99,1131.05 L1454.19,1154.83 L1459.96,1130.41 L1462.77,1140.05 L1465.72,1135.55 L1468.92,1105.35 L1472.12,1118.20 L1475.07,1064.86 L1477.89,1087.36 L1481.09,1152.90 L1483.65,1150.33 L1486.85,1131.70 L1490.06,1154.83 L1495.82,1053.94 L1499.02,1153.55 L1504.79,1075.15 L1507.99,1147.12 L1513.75,1077.07 L1516.96,1120.77 L1520.16,1130.41 L1522.72,1131.70 L1525.92,1146.48 L1529.12,1097.64 L1531.69,1095.71 L1534.89,1151.62 L1538.09,1146.48 L1540.91,1131.70 L1543.85,1153.55 L1546.92,1146.48 L1552.69,1118.20 L1555.25,1053.94 L1558.45,1016.67 L1561.65,1129.13 L1564.21,1102.78 L1567.80,1059.08 L1570.62,1114.35 L1573.82,1089.93 L1576.38,1024.38 L1579.58,1111.78 L1582.79,1053.94 L1585.99,1060.37 L1591.75,1117.56 L1597.52,1142.62 L1600.72,1122.06 L1606.48,1143.26 L1609.69,1114.35 L1612.63,1016.02 L1616.09,1102.78 L1619.29,1109.85 L1624.42,1141.98 L1628.26,1116.27 L1633.38,1139.41 L1639.53,1055.22 L1646.19,1118.20 L1648.75,1088.00 L1651.31,1116.92 L1654.52,1116.92 L1657.46,1061.01 L1660.28,1124.63 L1666.69,1068.08 L1669.89,1088.64 L1672.45,1071.29 L1678.21,1141.98 L1681.42,1137.48" fill="none" stroke="#8877bd" stroke-width="3.0" stroke-linejoin="round" stroke-linecap="round"/>
<path d="M1146.40,1111.78 L1147.94,1109.20 L1151.53,1135.55 L1159.85,1078.36 L1163.06,1118.20 L1166.26,1092.50 L1169.46,1122.70 L1175.22,1086.07 L1178.43,1114.99 L1184.19,1092.50 L1187.39,1123.99 L1193.16,1091.21 L1198.92,1122.70 L1202.12,1079.64 L1205.33,1120.13 L1211.09,1095.07 L1214.29,1111.78 L1220.06,1075.15 L1225.18,1113.06 L1232.22,1086.71 L1235.04,1116.92 L1237.99,1092.50 L1241.19,1114.35 L1246.96,1109.20 L1250.16,1095.07 L1252.72,1111.78 L1255.92,1083.50 L1259.12,1118.20 L1264.89,1075.15 L1268.09,1082.21 L1270.91,1118.20 L1273.85,1071.29 L1276.92,1118.20 L1277.06,1118.20 L1280.12,1118.20 L1283.33,1098.92 L1286.53,1120.77 L1291.65,1100.85 L1294.85,1121.41 L1301.26,1097.00 L1306.38,1122.06 L1310.22,1113.70 L1313.43,1121.41 L1319.19,1103.42 L1322.39,1121.41 L1328.16,1103.42 L1331.36,1121.41 L1337.12,1105.35 L1340.33,1121.41 L1346.09,1103.42 L1349.29,1121.41 L1355.06,1102.78 L1360.82,1121.41 L1364.02,1105.35 L1369.79,1122.06 L1376.19,1075.79 L1378.75,1118.20 L1381.96,1094.42 L1385.16,1118.20 L1390.92,1094.42 L1394.12,1106.63 L1396.05,1118.20 L1399.89,1094.42 L1403.09,1118.20 L1408.85,1094.42 L1414.48,1118.20 L1417.94,1098.92 L1422.81,1118.20 L1426.65,1100.85 L1429.85,1118.20 L1435.62,1098.28 L1441.38,1118.20 L1447.79,1053.30 L1450.99,1118.20 L1454.19,1098.92 L1459.96,1119.49 L1463.16,1098.28 L1466.36,1118.84 L1472.12,1102.14 L1477.89,1118.20 L1483.65,1047.51 L1486.85,1122.70 L1490.06,1100.85 L1495.82,1118.20 L1499.02,1097.00 L1504.79,1116.27 L1507.99,1097.00 L1511.19,1096.35 L1513.75,1113.70 L1519.52,1050.08 L1522.72,1114.35 L1525.92,1097.00 L1529.12,1107.92 L1534.89,1090.57 L1540.65,1124.63 L1543.85,1100.85 L1550.12,1119.49 L1555.89,1055.87 L1558.45,1119.49 L1561.65,1098.28 L1567.42,1119.49 L1570.62,1097.00 L1576.38,1118.20 L1579.58,1092.50 L1585.99,1111.13 L1591.75,1050.08 L1594.96,1119.49 L1597.52,1100.21 L1603.28,1119.49 L1606.48,1100.85 L1612.25,1119.49 L1615.45,1100.21 L1621.85,1118.84 L1627.62,1047.51 L1630.18,1118.20 L1633.38,1098.28 L1639.79,1118.84 L1642.99,1093.78 L1648.75,1118.84 L1651.31,1096.35 L1657.72,1119.49 L1663.48,1047.51 L1666.69,1118.20 L1669.89,1096.35 L1675.65,1118.20 L1678.85,1092.50 L1681.42,1095.07" fill="none" stroke="#eab50c" stroke-width="3.0" stroke-linejoin="round" stroke-linecap="round"/>
<path d="M1147.00,1186.12 L1151.50,1185.76 L1156.00,1185.96 L1160.50,1185.69 L1165.00,1185.66 L1169.50,1186.32 L1174.00,1186.38 L1178.50,1185.42 L1183.00,1186.09 L1187.50,1186.12 L1192.00,1185.23 L1196.50,1185.85 L1201.00,1185.42 L1205.50,1185.84 L1210.00,1185.65 L1214.50,1186.22 L1219.00,1185.65 L1223.50,1185.38 L1228.00,1185.78 L1232.50,1185.53 L1237.00,1185.61 L1241.50,1186.32 L1246.00,1185.51 L1250.50,1185.70 L1255.00,1186.05 L1259.50,1186.36 L1264.00,1185.38 L1268.50,1185.84 L1273.00,1185.55 L1277.50,1185.37 L1282.00,1185.56 L1286.50,1185.32 L1291.00,1185.94 L1295.50,1185.46 L1299.00,1185.81 L1302.00,1183.07 L1305.00,1185.81 L1309.00,1185.37 L1313.50,1186.29 L1318.00,1186.24 L1322.50,1186.14 L1327.00,1185.26 L1331.50,1185.89 L1336.00,1185.66 L1340.50,1186.05 L1345.00,1185.80 L1349.50,1185.95 L1354.00,1185.99 L1357.00,1185.81 L1360.00,1178.76 L1363.00,1185.81 L1367.50,1185.34 L1372.00,1185.60 L1376.50,1185.31 L1381.00,1185.39 L1385.50,1185.23 L1390.00,1185.61 L1394.50,1186.21 L1399.00,1185.39 L1403.50,1185.27 L1408.00,1185.34 L1412.50,1185.73 L1417.00,1185.56 L1421.50,1186.15 L1426.00,1185.42 L1430.50,1185.73 L1435.00,1186.06 L1439.50,1186.33 L1444.00,1185.40 L1448.50,1185.24 L1453.00,1186.30 L1457.50,1185.46 L1462.00,1185.92 L1466.50,1186.22 L1471.00,1186.05 L1475.50,1185.50 L1479.00,1185.81 L1482.00,1177.19 L1485.00,1185.81 L1489.00,1185.68 L1493.50,1186.35 L1498.00,1185.56 L1502.50,1186.01 L1507.00,1185.36 L1511.50,1185.25 L1516.00,1185.81 L1520.50,1185.23 L1525.00,1186.04 L1529.50,1186.31 L1534.00,1185.69 L1538.50,1186.36 L1543.00,1186.17 L1547.50,1185.92 L1552.00,1185.68 L1556.50,1186.22 L1561.00,1186.35 L1565.50,1185.38 L1570.00,1186.03 L1574.50,1185.27 L1579.00,1185.35 L1583.50,1185.96 L1588.00,1185.86 L1592.50,1185.79 L1597.00,1185.64 L1601.50,1185.70 L1606.00,1185.74 L1610.50,1185.67 L1615.00,1185.29 L1619.50,1185.80 L1624.00,1185.89 L1628.50,1185.55 L1633.00,1186.12 L1637.50,1186.05 L1642.00,1185.25 L1646.50,1185.79 L1651.00,1185.76 L1655.50,1186.39 L1660.00,1185.91 L1664.50,1185.72 L1669.00,1186.38 L1673.50,1185.68 L1678.00,1185.66 L1682.50,1186.33" fill="none" stroke="#2d9ad0" stroke-width="3.0" stroke-linejoin="round" stroke-linecap="round"/>
<rect x="1147.40" y="1201.10" width="1.5" height="7.5" fill="#6a6a6a"/>
<rect x="1282.00" y="1201.10" width="1.5" height="7.5" fill="#6a6a6a"/>
<rect x="1416.60" y="1201.10" width="1.5" height="7.5" fill="#6a6a6a"/>
<rect x="1551.30" y="1201.10" width="1.5" height="7.5" fill="#6a6a6a"/>
</svg>
<div class="t" style="left:511.40px;top:854.00px;font-size:15.43px;line-height:15px;color:#1e1e1e;transform:scaleX(1.0200);">0</div>
<div class="t" style="left:511.28px;top:799.98px;font-size:15.65px;line-height:16px;color:#1e1e1e;transform:scaleX(1.0200);">5</div>
<div class="t" style="left:502.66px;top:746.95px;font-size:15.43px;line-height:15px;color:#1e1e1e;transform:scaleX(1.0200);">10</div>
<div class="t" style="left:502.42px;top:692.92px;font-size:15.65px;line-height:16px;color:#1e1e1e;transform:scaleX(1.0200);">15</div>
<div class="t" style="left:502.66px;top:639.90px;font-size:15.43px;line-height:15px;color:#1e1e1e;transform:scaleX(1.0200);">20</div>
<div class="t" style="left:524.13px;top:872.50px;font-size:15.07px;line-height:15px;color:#1e1e1e;transform:scaleX(1.0800);">:15</div>
<div class="t" style="left:641.46px;top:873.00px;font-size:14.86px;line-height:15px;color:#1e1e1e;transform:scaleX(1.0800);">10:30</div>
<div class="t" style="left:776.26px;top:873.00px;font-size:14.86px;line-height:15px;color:#1e1e1e;transform:scaleX(1.0800);">10:45</div>
<div class="t" style="left:911.66px;top:873.00px;font-size:14.86px;line-height:15px;color:#1e1e1e;transform:scaleX(1.0800);">11:00</div>
<div class="t" style="left:1132.10px;top:854.10px;font-size:15.43px;line-height:15px;color:#1e1e1e;transform:scaleX(1.0200);">0</div>
<div class="t" style="left:1131.98px;top:794.77px;font-size:15.65px;line-height:16px;color:#1e1e1e;transform:scaleX(1.0200);">5</div>
<div class="t" style="left:1123.36px;top:736.45px;font-size:15.43px;line-height:15px;color:#1e1e1e;transform:scaleX(1.0200);">10</div>
<div class="t" style="left:1123.12px;top:677.13px;font-size:15.65px;line-height:16px;color:#1e1e1e;transform:scaleX(1.0200);">15</div>
<div class="t" style="left:1123.36px;top:618.80px;font-size:15.43px;line-height:15px;color:#1e1e1e;transform:scaleX(1.0200);">20</div>
<div class="t" style="left:1145.23px;top:872.50px;font-size:15.07px;line-height:15px;color:#1e1e1e;transform:scaleX(1.0800);">:15</div>
<div class="t" style="left:1262.36px;top:873.00px;font-size:14.86px;line-height:15px;color:#1e1e1e;transform:scaleX(1.0800);">10:30</div>
<div class="t" style="left:1396.96px;top:873.00px;font-size:14.86px;line-height:15px;color:#1e1e1e;transform:scaleX(1.0800);">10:45</div>
<div class="t" style="left:1532.26px;top:873.00px;font-size:14.86px;line-height:15px;color:#1e1e1e;transform:scaleX(1.0800);">11:00</div>
<div class="t" style="left:511.40px;top:1192.90px;font-size:15.43px;line-height:15px;color:#1e1e1e;transform:scaleX(1.0200);">0</div>
<div class="t" style="left:502.66px;top:1125.60px;font-size:15.43px;line-height:15px;color:#1e1e1e;transform:scaleX(1.0200);">10</div>
<div class="t" style="left:502.66px;top:1058.30px;font-size:15.43px;line-height:15px;color:#1e1e1e;transform:scaleX(1.0200);">20</div>
<div class="t" style="left:502.66px;top:991.00px;font-size:15.43px;line-height:15px;color:#1e1e1e;transform:scaleX(1.0200);">30</div>
<div class="t" style="left:524.13px;top:1211.20px;font-size:15.07px;line-height:15px;color:#1e1e1e;transform:scaleX(1.0800);">:15</div>
<div class="t" style="left:641.46px;top:1211.70px;font-size:14.86px;line-height:15px;color:#1e1e1e;transform:scaleX(1.0800);">10:30</div>
<div class="t" style="left:776.26px;top:1211.70px;font-size:14.86px;line-height:15px;color:#1e1e1e;transform:scaleX(1.0800);">10:45</div>
<div class="t" style="left:911.66px;top:1211.70px;font-size:14.86px;line-height:15px;color:#1e1e1e;transform:scaleX(1.0800);">11:00</div>
<div class="t" style="left:1132.10px;top:1192.70px;font-size:15.43px;line-height:15px;color:#1e1e1e;transform:scaleX(1.0200);">0</div>
<div class="t" style="left:1123.36px;top:1153.50px;font-size:15.43px;line-height:15px;color:#1e1e1e;transform:scaleX(1.0200);">10</div>
<div class="t" style="left:1123.36px;top:1114.30px;font-size:15.43px;line-height:15px;color:#1e1e1e;transform:scaleX(1.0200);">20</div>
<div class="t" style="left:1123.36px;top:1075.10px;font-size:15.43px;line-height:15px;color:#1e1e1e;transform:scaleX(1.0200);">30</div>
<div class="t" style="left:1123.36px;top:1035.90px;font-size:15.43px;line-height:15px;color:#1e1e1e;transform:scaleX(1.0200);">40</div>
<div class="t" style="left:1123.36px;top:996.70px;font-size:15.43px;line-height:15px;color:#1e1e1e;transform:scaleX(1.0200);">50</div>
<div class="t" style="left:1123.36px;top:957.50px;font-size:15.43px;line-height:15px;color:#1e1e1e;transform:scaleX(1.0200);">60</div>
<div class="t" style="left:1145.23px;top:1211.20px;font-size:15.07px;line-height:15px;color:#1e1e1e;transform:scaleX(1.0800);">:15</div>
<div class="t" style="left:1262.36px;top:1211.70px;font-size:14.86px;line-height:15px;color:#1e1e1e;transform:scaleX(1.0800);">10:30</div>
<div class="t" style="left:1396.96px;top:1211.70px;font-size:14.86px;line-height:15px;color:#1e1e1e;transform:scaleX(1.0800);">10:45</div>
<div class="t" style="left:1532.26px;top:1211.70px;font-size:14.86px;line-height:15px;color:#1e1e1e;transform:scaleX(1.0800);">11:00</div>
<svg class="a" style="left:690px;top:278px" width="34" height="58" viewBox="690 278 34 58"><polygon points="696,281.5 721,307.2 696,333" fill="#fdf7c4" stroke="#d2cdaa" stroke-width="1"/><rect x="694" y="282.5" width="2.5" height="50" fill="#fdf7c4"/></svg>
<svg class="a" style="left:1050px;top:556px" width="62" height="34" viewBox="1050 556 62 34"><polygon points="1056,562 1081,586 1106,562" fill="#fdf7c4" stroke="#d2cdaa" stroke-width="1"/><rect x="1057" y="560" width="48" height="2.6" fill="#fdf7c4"/></svg>
</body></html>
